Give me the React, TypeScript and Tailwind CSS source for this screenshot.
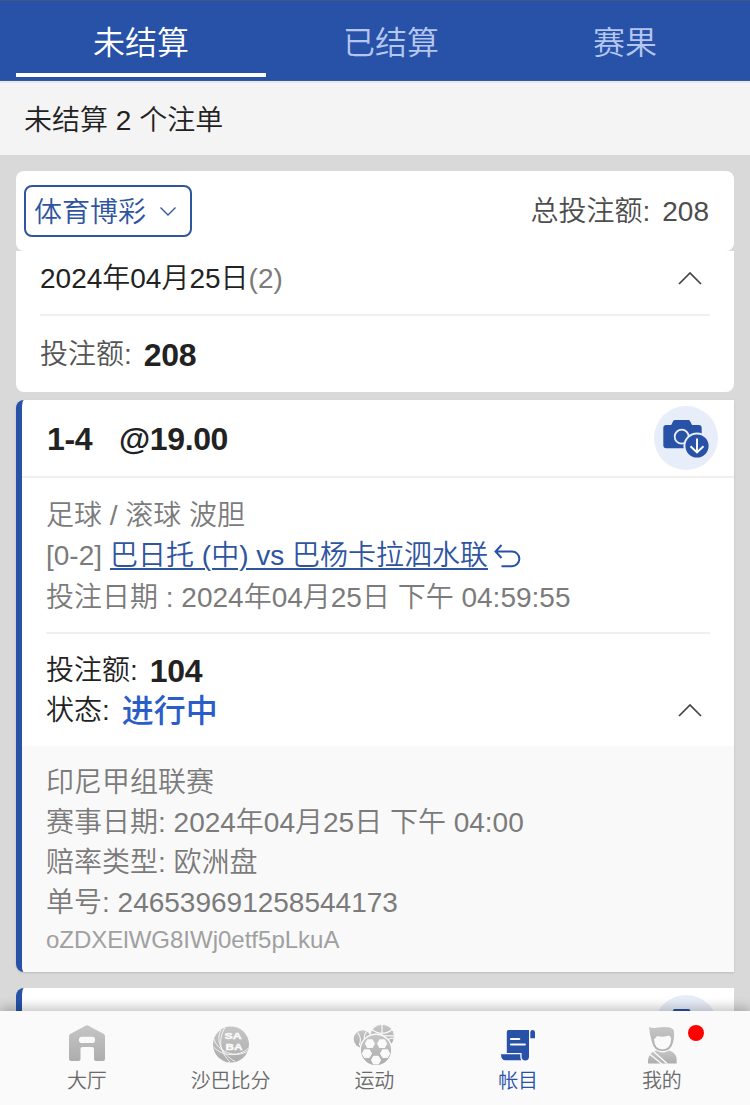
import type { ReactNode } from "react";

// ─── 数据 ────────────────────────────────────────────────────────────────────
const TABS = [
  { key: "open", label: "未结算" },
  { key: "settled", label: "已结算" },
  { key: "result", label: "赛果" },
] as const;

type NavItem = { label: string; icon: ReactNode; active?: boolean; dot?: boolean };

// ─── 图标 ────────────────────────────────────────────────────────────────────
function Chevron({ up }: { up?: boolean }) {
  return (
    <svg width="24" height="14" viewBox="0 0 24 14" fill="none" stroke="#444" strokeWidth="1.7">
      <path d={up ? "M1 12 12 1 23 12" : "M1 1 12 12 23 1"} />
    </svg>
  );
}

function CameraButton() {
  return (
    <svg className="shrink-0" width="64" height="64" viewBox="0 0 64 64">
      <circle cx="32" cy="32" r="32" fill="#e8edfa" />
      <path
        d="M12 19h5.2l2-4q.5-1 1.6-1h13.6q1.1 0 1.6 1l2 4H44.7a3 3 0 0 1 3 3v17.3a3 3 0 0 1-3 3H12.3a3 3 0 0 1-3-3V22a3 3 0 0 1 3-3z"
        fill="#2752a8"
      />
      <circle cx="27.7" cy="30.7" r="7" fill="none" stroke="#e8edfa" strokeWidth="1.8" />
      <circle cx="43" cy="40" r="12.6" fill="#2752a8" stroke="#e8edfa" strokeWidth="2" />
      <path d="M43 32.5V46M36.5 40.2 43 46.5l6.5-6.3" fill="none" stroke="#fff" strokeWidth="1.9" />
    </svg>
  );
}

function HomeIcon() {
  return (
    <svg width="44" height="44" viewBox="0 0 44 44">
      <path
        fillRule="evenodd"
        fill="url(#gray)"
        d="M21 4.5q1-.7 2 0L38.8 13q1.2.8 1.2 2.2V38q0 2-2 2H31q-2 0-2-2V28q0-2-2-2H17.5q-2 0-2 2v10q0 2-2 2H6q-2 0-2-2V15.2q0-1.4 1.2-2.2zM17 15.8a3.1 3.1 0 0 0 0 6.2H27a3.1 3.1 0 0 0 0-6.2z"
      />
    </svg>
  );
}

function SabaIcon() {
  return (
    <svg width="44" height="44" viewBox="0 0 44 44">
      <circle cx="22" cy="23.5" r="18" fill="url(#gray)" />
      <g fill="none" stroke="#fafafa" strokeWidth="0.9">
        <path d="M12 9C6 20 13 33 26 40.5M16 6.5C8 20 12 32 21 41M5 18C8 30 26 38 39 30M4.5 26C14 36 30 36 39.5 27" />
      </g>
      <g fill="#fafafa" stroke="#fafafa" strokeWidth="0.4" fontFamily="Liberation Sans, sans-serif" fontSize="9" fontWeight="700">
        <text x="15.5" y="17.8" textLength="17" lengthAdjust="spacingAndGlyphs">
          SA
        </text>
        <text x="16.500" y="28.8" textLength="17" lengthAdjust="spacingAndGlyphs">
          BA
        </text>
      </g>
    </svg>
  );
}

// 足球白色块中心
const PATCHES = [
  [17.9, 22.7],
  [30.1, 22.7],
  [14.9, 32.6],
  [33.1, 32.6],
  [24, 39.2],
];

function BallsIcon() {
  return (
    <svg className="overflow-visible" width="44" height="44" viewBox="0 0 44 44">
      <circle cx="10.5" cy="18" r="8.8" fill="url(#gray)" />
      <path d="M5.5 11.5q5 6 1.5 13M14.5 10.5q-3 4-2 9" fill="none" stroke="#fafafa" strokeWidth="1.1" />
      <circle cx="30.2" cy="15.5" r="12.2" fill="url(#gray)" stroke="#fafafa" />
      <path d="M30 3v12M20 8.5q10 8 21-.5M30 14.8h13M35 19q3-2 7-2" fill="none" stroke="#fafafa" strokeWidth="1.2" />
      <circle cx="24" cy="29" r="15.8" fill="url(#gray)" stroke="#fafafa" strokeWidth="1.4" />
      {PATCHES.map(([x, y]) => (
        <path
          key={`${x}-${y}`}
          transform={`translate(${x} ${y})`}
          d="M-2.2-3.6H2.2L4.2 0 2.2 3.6H-2.2L-4.2 0z"
          fill="#fafafa"
          stroke="#fafafa"
          strokeWidth="1.6"
          strokeLinejoin="round"
        />
      ))}
    </svg>
  );
}

function BillIcon() {
  return (
    <svg width="44" height="44" viewBox="0 0 44 44" fill="#2752a8">
      <path d="M12.5 9H33V35.5q0 4-3.7 4t-3.7-4V32H10.8V11q0-2 1.7-2z" />
      <path d="M34.3 17.3V11q0-2 2.3-2t2.4 2.3v6zM5 33.2H24.3v2q0 2.5 1 4H9.500q-4.500 0-4.500-6z" />
      <path d="M15 18h8.200M15 23.5h13.800" stroke="#fafafa" strokeWidth="2.2" strokeLinecap="round" />
    </svg>
  );
}

function UserIcon() {
  return (
    <svg width="44" height="44" viewBox="0 0 44 44">
      <path d="M9 6q3 1.5 7 .8 15-2.500 17.500 2Q35 14 33 21.500 31 30 22.500 30T12 21Q9.500 13 9 6z" fill="url(#gray)" />
      <path d="M14 18q2-1 3-3 7 1.500 12-.5 2 1 2.200 3.500-.7 10.500-8.700 10.500T14 18z" fill="#fafafa" />
      <path d="M8 42.500v-3.500q1-7.500 8.500-9.500 6 4 12.500 0 7.500 2 7.700 9.500v3.500z" fill="url(#gray)" />
      <path d="m9.500 33 12.500 10M13 30l14 12.500" stroke="#fafafa" strokeWidth="1.5" />
    </svg>
  );
}

const NAV: NavItem[] = [
  { label: "大厅", icon: <HomeIcon /> },
  { label: "沙巴比分", icon: <SabaIcon /> },
  { label: "运动", icon: <BallsIcon /> },
  { label: "帐目", icon: <BillIcon />, active: true },
  { label: "我的", icon: <UserIcon />, dot: true },
];

// ─── 区块 ────────────────────────────────────────────────────────────────────
function Summary() {
  return (
    <>
      <div className="flex h-20 shrink-0 items-center justify-between rounded-lg bg-white pl-2 pr-[25px]">
        <button className="flex h-[52px] w-[168px] items-center justify-between rounded-lg border-2 border-[#2f559f] pl-2 pr-3.5 text-[#2f559f]">
          <span className="pt-[3px]">体育博彩</span>
          <svg width="16" height="9" viewBox="0 0 16 9" fill="none" stroke="#2f559f" strokeWidth="1.3">
            <path d="M.5.5 8 8 15.5.5" />
          </svg>
        </button>
        <div className="flex gap-3 pt-0.5 text-[#4d4d4d]">
          <span>总投注额:</span>
          <span>208</span>
        </div>
      </div>
      <div className="h-[141px] shrink-0 rounded-b-lg bg-white px-6">
        <div className="flex h-[65px] items-center justify-between border-b-2 border-[#f0f0f0] pr-2 pb-2">
          <div className="pt-px">
            2024年04月25日<span className="text-[#7b7b7b]">(2)</span>
          </div>
          <Chevron up />
        </div>
        <div className="flex h-[76px] items-center gap-3 pt-0.5">
          <span className="text-[#555]">投注额:</span>
          <span className="text-[32px] font-bold tracking-[-0.3px]">208</span>
        </div>
      </div>
    </>
  );
}

function BetCard() {
  return (
    <div className="mt-2 h-[572px] shrink-0 overflow-hidden rounded-l-lg border-l-[6px] border-[#2752a8] bg-white shadow-sm">
      <div className="flex h-[78px] items-center justify-between border-b-2 border-[#f0f0f0] pl-[25px] pr-4">
        <div className="flex gap-[27px] pt-0.5 text-[32px] font-bold tracking-[-0.4px]">
          <span>1-4</span>
          <span>@19.00</span>
        </div>
        <CameraButton />
      </div>
      <div className="mx-6 h-[156px] border-b-2 border-[#f0f0f0] pt-[18px] text-[#7b7b7b]">
        <div className="h-10">足球 / 滚球 波胆</div>
        <div className="flex h-[42px] items-start">
          <span className="mr-2">[0-2]</span>
          <span className="text-[#2f559f] underline decoration-2 underline-offset-[3px]">巴日托 (中) vs 巴杨卡拉泗水联</span>
          <svg className="ml-1.5 mt-2" width="28" height="26" viewBox="0 0 28 26" fill="none" stroke="#2752a8" strokeWidth="2">
            <path d="M7.5 1 1.5 7.500l6 6.500M1.500 7.500H18a7.300 7.300 0 0 1 0 14.700H7.500" />
          </svg>
        </div>
        <div>投注日期 : 2024年04月25日 下午 04:59:55</div>
      </div>
      <div className="flex h-28 justify-between pl-6 pr-8 pt-[17px]">
        <div>
          <div className="flex gap-3">
            <span>投注额:</span>
            <span className="text-[32px] font-bold tracking-[-0.3px]">104</span>
          </div>
          <div className="flex gap-3">
            <span>状态:</span>
            <span className="text-[32px] font-medium text-[#2a5dc8]">进行中</span>
          </div>
        </div>
        <div className="mt-[53px]">
          <Chevron up />
        </div>
      </div>
      <div className="h-[226px] bg-[#f9f9f9] pl-6 pt-[17px] text-[#7b7b7b]">
        <div>印尼甲组联赛</div>
        <div>赛事日期: 2024年04月25日 下午 04:00</div>
        <div>赔率类型: 欧洲盘</div>
        <div>单号: 246539691258544173</div>
        <div className="text-2xl leading-[34px] text-[#a0a0a0]">oZDXElWG8IWj0etf5pLkuA</div>
      </div>
    </div>
  );
}

// ─── 主组件 ──────────────────────────────────────────────────────────────────
export default function App() {
  return (
    <div className="flex h-[1105px] w-[750px] flex-col overflow-hidden bg-[#d9d9d9] font-['Liberation_Sans','Noto_Sans_CJK_SC',sans-serif] text-[28px] font-[350] leading-10 text-[#222]">
      {/* 各图标共用的灰色渐变 */}
      <svg className="absolute" width="0" height="0">
        <defs>
          <linearGradient id="gray" x1="0" y1="0" x2="0" y2="1">
            <stop offset="0" stopColor="#c6c6c6" />
            <stop offset="1" stopColor="#adadad" />
          </linearGradient>
        </defs>
      </svg>

      <div className="flex h-[81px] shrink-0 border-y border-[#3d5788] bg-[#2752a8] pl-4">
        {TABS.map((t, i) => (
          <div
            key={t.key}
            className={`flex h-[76px] items-center justify-center border-b-4 pt-3 text-[32px] ${
              i === 0 ? "w-[250px] border-white text-white" : i === 1 ? "w-[250px] border-transparent text-[#b5c6f0]" : "w-[218px] border-transparent text-[#b5c6f0]"
            }`}
          >
            {t.label}
          </div>
        ))}
      </div>
      <div className="flex h-[74px] shrink-0 items-center border-t-2 border-[#e3e8f5] bg-[#f4f4f4] pl-6 pt-[3px]">未结算 2 个注单</div>

      <div className="flex min-h-0 flex-1 flex-col overflow-hidden px-4 pt-4">
        <Summary />
        <BetCard />
        <div className="mt-4 flex h-[78px] shrink-0 items-center justify-end rounded-l-lg border-l-[6px] border-[#2752a8] bg-white pr-4">
          <CameraButton />
        </div>
      </div>

      <nav className="relative flex h-[94px] shrink-0 bg-[#fafafa] px-[15px] shadow-[0_-4px_10px_rgba(0,0,0,0.22)]">
        {NAV.map((n) => (
          <div
            key={n.label}
            className={`relative flex w-[143.750px] flex-col items-center pt-2.5 text-xl leading-8 ${n.active ? "text-[#2752a8]" : "text-[#6b6b6b]"}`}
          >
            {n.icon}
            <span>{n.label}</span>
            {n.dot && <i className="absolute left-[98px] top-3.5 size-4 rounded-full bg-[#f00]" />}
          </div>
        ))}
      </nav>
    </div>
  );
}
